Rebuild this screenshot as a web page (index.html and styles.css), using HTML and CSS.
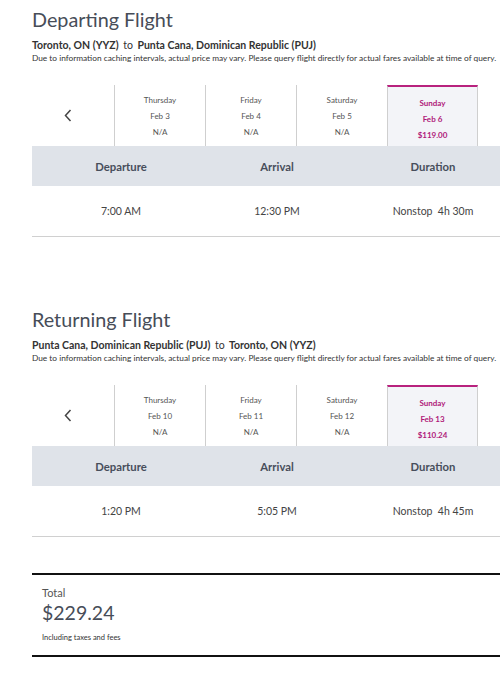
FILE: index.html
```html
<!DOCTYPE html>
<html>
<head>
<meta charset="utf-8">
<link rel="stylesheet" href="styles.css">
</head>
<body>
<div class="page">
  <section class="flight">
    <h1 class="title">Departing Flight</h1>
    <div class="route"><span>Toronto, ON (YYZ)</span> <span class="to">to</span> <span>Punta Cana, Dominican Republic (PUJ)</span></div>
    <div class="note">Due to information caching intervals, actual price may vary. Please query flight directly for actual fares available at time of query.</div>
    <div class="dates">
      <div class="prev"><svg width="8" height="13" viewBox="0 0 8 13"><path d="M6.5 1 L1.5 6.5 L6.5 12" fill="none" stroke="#444" stroke-width="1.5"/></svg></div>
      <div class="day"><span>Thursday</span><span>Feb 3</span><span>N/A</span></div>
      <div class="day"><span>Friday</span><span>Feb 4</span><span>N/A</span></div>
      <div class="day"><span>Saturday</span><span>Feb 5</span><span>N/A</span></div>
      <div class="day selected"><span>Sunday</span><span>Feb 6</span><span>$119.00</span></div>
    </div>
    <div class="head"><span>Departure</span><span>Arrival</span><span>Duration</span></div>
    <div class="row"><span>7:00 AM</span><span>12:30 PM</span><span>Nonstop&nbsp;&nbsp;4h 30m</span></div>
  </section>
  <section class="flight">
    <h1 class="title">Returning Flight</h1>
    <div class="route"><span>Punta Cana, Dominican Republic (PUJ)</span> <span class="to">to</span> <span>Toronto, ON (YYZ)</span></div>
    <div class="note">Due to information caching intervals, actual price may vary. Please query flight directly for actual fares available at time of query.</div>
    <div class="dates">
      <div class="prev"><svg width="8" height="13" viewBox="0 0 8 13"><path d="M6.5 1 L1.5 6.5 L6.5 12" fill="none" stroke="#444" stroke-width="1.5"/></svg></div>
      <div class="day"><span>Thursday</span><span>Feb 10</span><span>N/A</span></div>
      <div class="day"><span>Friday</span><span>Feb 11</span><span>N/A</span></div>
      <div class="day"><span>Saturday</span><span>Feb 12</span><span>N/A</span></div>
      <div class="day selected"><span>Sunday</span><span>Feb 13</span><span>$110.24</span></div>
    </div>
    <div class="head"><span>Departure</span><span>Arrival</span><span>Duration</span></div>
    <div class="row"><span>1:20 PM</span><span>5:05 PM</span><span>Nonstop&nbsp;&nbsp;4h 45m</span></div>
  </section>
  <section class="total">
    <div class="total-label">Total</div>
    <div class="total-amount">$229.24</div>
    <div class="total-note">Including taxes and fees</div>
  </section>
</div>
</body>
</html>
```

FILE: styles.css
```css
html, body {
  margin: 0;
  padding: 0;
  background: #fff;
  overflow: hidden;
}
body {
  font-family: Lato, "Open Sans", sans-serif;
  color: #444;
}
.page {
  margin-left: 32px;
  width: 540px;
  padding-top: 6px;
}
.flight + .flight {
  margin-top: 69px;
}
.title {
  margin: 0;
  font-size: 19.8px;
  font-weight: 400;
  line-height: 26px;
  color: #474d58;
}
.route {
  margin-top: 6px;
  font-size: 10.5px;
  font-weight: 700;
  color: #333;
  line-height: 14px;
}
.route .to {
  font-weight: 400;
  margin: 0 2px;
}
.note {
  font-size: 8.3px;
  line-height: 11px;
  color: #333;
  margin-top: 1px;
  white-space: nowrap;
}
.dates {
  margin-top: 21px;
  display: flex;
  height: 61px;
}
.prev {
  width: 82px;
  display: flex;
  align-items: center;
  justify-content: center;
  padding-right: 10px;
  box-sizing: border-box;
}
.day {
  width: 91px;
  border-left: 1px solid #cfcfcf;
  box-sizing: border-box;
  display: flex;
  flex-direction: column;
  align-items: center;
  padding-top: 7px;
  font-size: 8px;
  line-height: 16px;
  color: #555;
}
.day.selected {
  border-top: 2px solid #b8227e;
  border-right: 1px solid #cfcfcf;
  background: #f3f4f8;
  color: #b0197a;
  font-weight: 700;
  padding-top: 8px;
}
.head, .row {
  display: grid;
  grid-template-columns: 156px 156px 156px;
  padding-left: 11px;
  justify-items: center;
  align-items: center;
}
.head {
  height: 40px;
  background: #dfe3e9;
  font-size: 11.3px;
  font-weight: 700;
  color: #474e5b;
}
.row {
  height: 50px;
  border-bottom: 1px solid #d0d0d0;
  font-size: 10.5px;
  color: #444;
}
.total {
  margin-top: 36px;
  border-top: 2px solid #111;
  border-bottom: 2px solid #111;
  padding: 11px 10px 9px;
  height: 60px;
}
.total-label {
  font-size: 11px;
  line-height: 14px;
  color: #555;
}
.total-amount {
  font-size: 19.5px;
  line-height: 24px;
  color: #474d58;
  margin-top: 1px;
}
.total-note {
  font-size: 7.5px;
  line-height: 10px;
  color: #333;
  margin-top: 8px;
}
```
